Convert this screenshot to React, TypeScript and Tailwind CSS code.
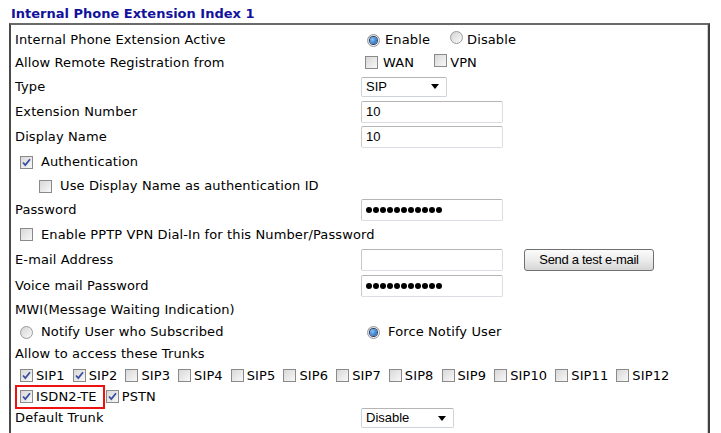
import type { ReactNode } from 'react';

const label = "font-['DejaVu_Sans',Verdana,sans-serif] text-[13px] tracking-[0.12px] text-black";
const ctl = "font-['Liberation_Sans',Arial,sans-serif] text-[13px] text-black";

function Check({ on = false }: { on?: boolean }) {
  return (
    <span className="inline-flex w-[13px] h-[13px] shrink-0 items-center justify-center border border-[#8a8a8a] bg-gradient-to-br from-[#d8d8d8] to-[#f8f8f8]">
      {on && (
        <svg width="9" height="9" viewBox="0 0 9 9">
          <path d="M1 4.5 L3.3 7 L8 1.2" fill="none" stroke="#3b4fa0" strokeWidth="1.8" />
        </svg>
      )}
    </span>
  );
}

function Radio({ on = false }: { on?: boolean }) {
  return (
    <span className="inline-flex w-[13px] h-[13px] shrink-0 items-center justify-center rounded-full border border-[#9a9a9a] bg-gradient-to-br from-[#d4d4d4] to-[#fafafa]">
      {on && <span className="w-[7px] h-[7px] rounded-full bg-[radial-gradient(circle_at_35%_35%,#7fc4ff,#1452a8)] ring-1 ring-[#2a3a60]" />}
    </span>
  );
}

function TextBox({ value = '', dots = false }: { value?: string; dots?: boolean }) {
  return (
    <div className={`w-[142px] h-[22px] flex items-center px-[4px] border border-[#dadde3] border-t-[#b5b5b5] border-l-[#c8c8c8] rounded-[2px] bg-white ${ctl}`}>
      {dots ? (
        <span className="flex gap-[1px]">
          {Array.from({ length: 11 }).map((_, i) => (
            <span key={i} className="w-[6px] h-[6px] rounded-full bg-black" />
          ))}
        </span>
      ) : (
        value
      )}
    </div>
  );
}

function Select({ value, w }: { value: string; w: string }) {
  return (
    <div className={`${w} h-[20px] flex items-center justify-between pl-[4px] pr-[7px] border border-[#cfd3da] border-t-[#b5b5b5] rounded-[2px] bg-white ${ctl}`}>
      <span>{value}</span>
      <svg width="8" height="5" viewBox="0 0 8 5">
        <path d="M0 0 H8 L4 5 Z" fill="#000" />
      </svg>
    </div>
  );
}

function Row({ h, left, right }: { h: string; left: ReactNode; right?: ReactNode }) {
  return (
    <div className={`flex items-center ${h}`}>
      <div className={`w-[350px] pl-[4px] flex items-center ${label}`}>{left}</div>
      <div className="flex items-center">{right}</div>
    </div>
  );
}

const trunks = [
  { n: 'SIP1', on: true },
  { n: 'SIP2', on: true },
  { n: 'SIP3' },
  { n: 'SIP4' },
  { n: 'SIP5' },
  { n: 'SIP6' },
  { n: 'SIP7' },
  { n: 'SIP8' },
  { n: 'SIP9' },
  { n: 'SIP10' },
  { n: 'SIP11' },
  { n: 'SIP12' },
];

export default function App() {
  return (
    <div className="w-[721px] h-[433px] overflow-hidden bg-white">
      <h1 className="pl-[11px] pt-[4px] h-[23px] font-['DejaVu_Sans',Verdana,sans-serif] text-[13px] font-bold text-[#12129c]">
        Internal Phone Extension Index 1
      </h1>

      <div className="ml-[9px] w-[701px] h-[420px] border-2 border-b-0 border-t-[#6a6a6a] border-l-[#4a4a4a] border-r-[#404040] shadow-[inset_-1px_0_0_#d0d0d0] pt-[4px]">
        <Row
          h="h-[22px]"
          left="Internal Phone Extension Active"
          right={
            <div className={`flex items-center pl-[6px] ${label}`}>
              <Radio on />
              <span className="ml-[5px]">Enable</span>
              <span className="ml-[20px]"><Radio /></span>
              <span className="ml-[4px]">Disable</span>
            </div>
          }
        />
        <Row
          h="h-[23px]"
          left="Allow Remote Registration from"
          right={
            <div className={`flex items-center pl-[4px] ${label}`}>
              <Check />
              <span className="ml-[5px]">WAN</span>
              <span className="ml-[20px]"><Check /></span>
              <span className="ml-[3px]">VPN</span>
            </div>
          }
        />
        <Row h="h-[25px]" left="Type" right={<Select value="SIP" w="w-[86px]" />} />
        <Row h="h-[25px]" left="Extension Number" right={<TextBox value="10" />} />
        <Row h="h-[26px]" left="Display Name" right={<TextBox value="10" />} />
        <Row
          h="h-[24px]"
          left={
            <span className="flex items-center pl-[5px]">
              <Check on />
              <span className="ml-[8px]">Authentication</span>
            </span>
          }
        />
        <Row
          h="h-[24px]"
          left={
            <span className="flex items-center pl-[24px]">
              <Check />
              <span className="ml-[8px]">Use Display Name as authentication ID</span>
            </span>
          }
        />
        <Row h="h-[24px]" left="Password" right={<TextBox dots />} />
        <div className={`flex items-center h-[25px] pl-[9px] ${label}`}>
          <Check />
          <span className="ml-[8px]">Enable PPTP VPN Dial-In for this Number/Password</span>
        </div>
        <Row
          h="h-[26px]"
          left="E-mail Address"
          right={
            <div className="flex items-center">
              <TextBox />
              <button className="ml-[21px] w-[130px] h-[22px] rounded-[3px] border border-[#707070] bg-gradient-to-b from-[#fbfbfb] via-[#ececec] to-[#d6d6d6] text-[13px] font-['Liberation_Sans',Arial,sans-serif] tracking-[-0.3px] text-black">
                Send a test e-mail
              </button>
            </div>
          }
        />
        <Row h="h-[25px]" left="Voice mail Password" right={<TextBox dots />} />
        <Row h="h-[23px]" left="MWI(Message Waiting Indication)" />
        <Row
          h="h-[22px]"
          left={
            <span className="flex items-center pl-[5px]">
              <Radio />
              <span className="ml-[8px]">Notify User who Subscribed</span>
            </span>
          }
          right={
            <span className={`flex items-center pl-[6px] ${label}`}>
              <Radio on />
              <span className="ml-[8px]">Force Notify User</span>
            </span>
          }
        />
        <Row h="h-[22px]" left="Allow to access these Trunks" />
        <div className={`flex items-center h-[21px] pl-[9px] ${label}`}>
          {trunks.map((t) => (
            <span key={t.n} className="flex items-center mr-[8px]">
              <Check on={t.on} />
              <span className="ml-[3px]">{t.n}</span>
            </span>
          ))}
        </div>
        <div className={`flex items-center h-[21px] pl-[4px] ${label}`}>
          <span className="flex items-center h-[24px] pl-[3px] pr-[6px] border-2 border-[#ee1111]">
            <Check on />
            <span className="ml-[3px]">ISDN2-TE</span>
          </span>
          <span className="flex items-center ml-[1px]">
            <Check on />
            <span className="ml-[3px]">PSTN</span>
          </span>
        </div>
        <Row h="h-[22px]" left="Default Trunk" right={<Select value="Disable" w="w-[93px]" />} />
      </div>
    </div>
  );
}
